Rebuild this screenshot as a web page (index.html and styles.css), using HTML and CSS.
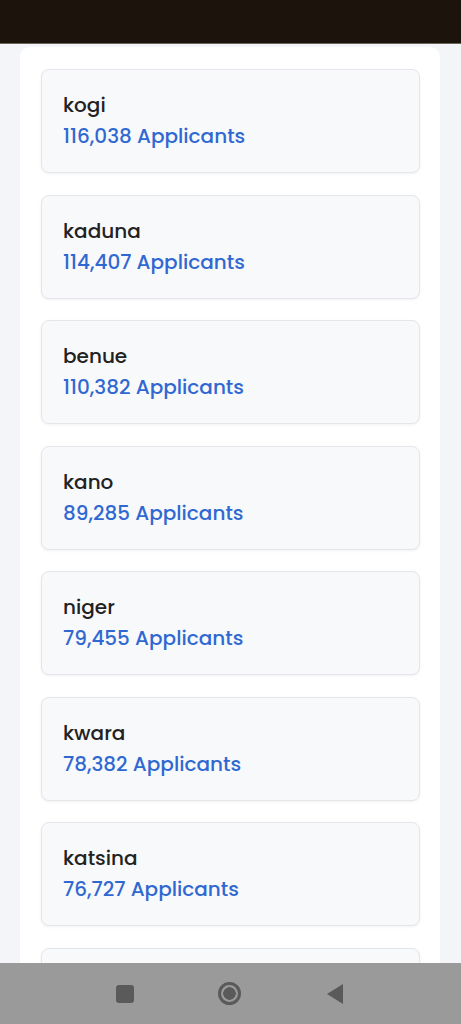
FILE: index.html
```html
<!DOCTYPE html>
<html lang="en">
<head>
    <meta charset="UTF-8">
    <meta name="viewport" content="width=device-width, initial-scale=1.0">
    <title>Applicants by State</title>
    <link rel="stylesheet" href="styles.css">
</head>
<body>

    <div class="status-bar"></div>

    <div class="panel">
        <div class="state-card">
            <p class="state-name">kogi</p>
            <p class="state-count">116,038 Applicants</p>
        </div>
        <div class="state-card">
            <p class="state-name">kaduna</p>
            <p class="state-count">114,407 Applicants</p>
        </div>
        <div class="state-card">
            <p class="state-name">benue</p>
            <p class="state-count">110,382 Applicants</p>
        </div>
        <div class="state-card">
            <p class="state-name">kano</p>
            <p class="state-count">89,285 Applicants</p>
        </div>
        <div class="state-card">
            <p class="state-name">niger</p>
            <p class="state-count">79,455 Applicants</p>
        </div>
        <div class="state-card">
            <p class="state-name">kwara</p>
            <p class="state-count">78,382 Applicants</p>
        </div>
        <div class="state-card">
            <p class="state-name">katsina</p>
            <p class="state-count">76,727 Applicants</p>
        </div>
        <!-- next card, scrolled under the nav bar -->
        <div class="state-card"></div>
    </div>

    <div class="nav-bar">
        <span class="nav-square"></span>
        <span class="nav-home"></span>
        <svg class="nav-back" width="20" height="22" viewBox="0 0 20 22">
            <path d="M18 1 L18 21 L2 11 Z" fill="#5a5a5a"/>
        </svg>
    </div>

</body>
</html>
```

FILE: styles.css
```css
body {
    margin: 0;
    font-family: "Poppins", "Open Sans", sans-serif;
    background-color: #f3f5f8;
    height: 1024px;
    overflow: hidden;
}
.status-bar {
    height: 43px;
    background-color: #1c140c;
    border-bottom: 1px solid #6b6658;
}
.panel {
    margin: 3px 21px 0 20px;
    padding: 22px 20px 20px 21px;
    background-color: #ffffff;
    border-radius: 10px;
    display: flex;
    flex-direction: column;
    gap: 21.5px;
}
.state-card {
    height: 104px;
    flex-shrink: 0;
    box-sizing: border-box;
    padding: 21px 21px;
    background-color: #f8f9fb;
    border: 1px solid #e4e6ea;
    border-radius: 8px;
    box-shadow: 0 1px 3px rgba(0, 0, 0, 0.06);
}
.state-name {
    margin: 0;
    font-size: 20px;
    font-weight: 500;
    line-height: 29px;
    color: #222222;
}
.state-count {
    margin: 2px 0 0;
    font-size: 20px;
    font-weight: 500;
    line-height: 29px;
    color: #3068d2;
}
.nav-bar {
    position: fixed;
    left: 0;
    right: 0;
    bottom: 0;
    height: 61px;
    background-color: #9a9a9a;
    display: flex;
    align-items: center;
    justify-content: center;
    gap: 84px;
}
.nav-square {
    width: 18px;
    height: 18px;
    border-radius: 3px;
    background-color: #5a5a5a;
}
.nav-home {
    width: 17px;
    height: 17px;
    border: 3px solid #5a5a5a;
    border-radius: 50%;
    background: radial-gradient(circle, #5a5a5a 0 6px, transparent 6.5px);
}
.nav-back {
    display: block;
}
```
